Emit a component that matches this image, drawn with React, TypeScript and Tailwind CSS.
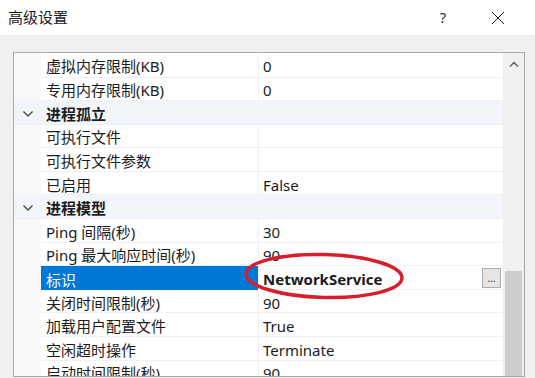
import React from "react";

type Row =
  | { kind: "cat"; label: string }
  | { kind: "prop"; label: string; value?: string; selected?: boolean };

const rows: Row[] = [
  { kind: "prop", label: "虚拟内存限制(KB)", value: "0" },
  { kind: "prop", label: "专用内存限制(KB)", value: "0" },
  { kind: "cat", label: "进程孤立" },
  { kind: "prop", label: "可执行文件", value: "" },
  { kind: "prop", label: "可执行文件参数", value: "" },
  { kind: "prop", label: "已启用", value: "False" },
  { kind: "cat", label: "进程模型" },
  { kind: "prop", label: "Ping 间隔(秒)", value: "30" },
  { kind: "prop", label: "Ping 最大响应时间(秒)", value: "90" },
  { kind: "prop", label: "标识", value: "NetworkService", selected: true },
  { kind: "prop", label: "关闭时间限制(秒)", value: "90" },
  { kind: "prop", label: "加载用户配置文件", value: "True" },
  { kind: "prop", label: "空闲超时操作", value: "Terminate" },
  { kind: "prop", label: "启动时间限制(秒)", value: "90" },
];

const Chevron = () => (
  <svg width="12" height="8" viewBox="0 0 12 8">
    <path d="M1.5 1.5 L6 6 L10.5 1.5" fill="none" stroke="#4a4a4a" strokeWidth="1.4" />
  </svg>
);

export default function App() {
  return (
    <div
      className="w-[535px] h-[378px] bg-[#f0f0f0] overflow-hidden flex flex-col text-[#1b1b1b]"
      style={{ fontFamily: '"Noto Sans", "Noto Sans CJK SC", sans-serif' }}
    >
      <div className="h-[35px] bg-white flex items-center shrink-0">
        <div className="pl-[8px] text-[15px] leading-none flex-1">高级设置</div>
        <div className="w-[20px] text-center text-[15px] leading-none text-[#333] mr-[38px]">?</div>
        <svg width="14" height="14" viewBox="0 0 14 14" className="mr-[30px]">
          <path d="M1 1 L13 13 M13 1 L1 13" stroke="#222" strokeWidth="1" />
        </svg>
      </div>
      <div className="pl-[13px] pr-[10px] pt-[17px]">
        <div className="h-[325px] border border-[#a9a9a9] bg-white flex overflow-hidden">
          <div className="w-[489px] h-[323px] relative overflow-hidden">
            {rows.map((r, i) => {
              const h = i === 0 ? "h-[24.5px]" : "h-[23.6px]";
              if (r.kind === "cat") {
                return (
                  <div key={i} className={`${h} flex bg-[#f2f5fa] border-b border-[#eceff3]`}>
                    <div className="w-[27px] flex items-center justify-center pt-[3px]">
                      <Chevron />
                    </div>
                    <div className="pl-[5px] pt-[4px] flex items-center text-[15px] font-bold leading-none">
                      {r.label}
                    </div>
                  </div>
                );
              }
              return (
                <div key={i} className={`${h} flex`}>
                  <div className="w-[27px] bg-[#f9f9f9]" />
                  <div
                    className={`w-[217px] pl-[5px] pt-[4px] flex items-center text-[15px] leading-none whitespace-nowrap ${
                      r.selected ? "bg-[#0078d7] text-white" : "border-b border-[#f0f0f0]"
                    }`}
                  >
                    {r.label}
                  </div>
                  <div className="w-[1px] bg-[#f0f0f0]" />
                  <div className="flex-1 pl-[4px] pr-[2px] flex items-center border-b border-[#f0f0f0] text-[15px] leading-none">
                    <span className={`pt-[4px] flex-1 ${r.selected ? "font-bold" : ""}`}>{r.value}</span>
                    {r.selected && (
                      <div className="w-[19px] h-[20px] bg-[#e5e5e5] border border-[#adadad] flex items-center justify-center text-[10px] leading-none text-[#333]">
                        ...
                      </div>
                    )}
                  </div>
                </div>
              );
            })}
            <svg
              className="absolute left-[229px] top-[199px] pointer-events-none"
              width="164"
              height="52"
              viewBox="0 0 164 52"
            >
              <ellipse
                cx="81"
                cy="24"
                rx="78"
                ry="21.5"
                fill="none"
                stroke="#d61f2a"
                strokeWidth="3.5"
                transform="rotate(1.5 81 24)"
              />
            </svg>
          </div>
          <div className="flex-1 bg-[#f0f0f0] flex flex-col">
            <div className="h-[22px] flex items-center justify-center">
              <svg width="10" height="7" viewBox="0 0 10 7">
                <path d="M1 5.5 L5 1.5 L9 5.5" fill="none" stroke="#606060" strokeWidth="1.5" />
              </svg>
            </div>
            <div className="mt-auto mx-[2px] h-[105px] bg-[#cdcdcd]" />
          </div>
        </div>
      </div>
    </div>
  );
}
